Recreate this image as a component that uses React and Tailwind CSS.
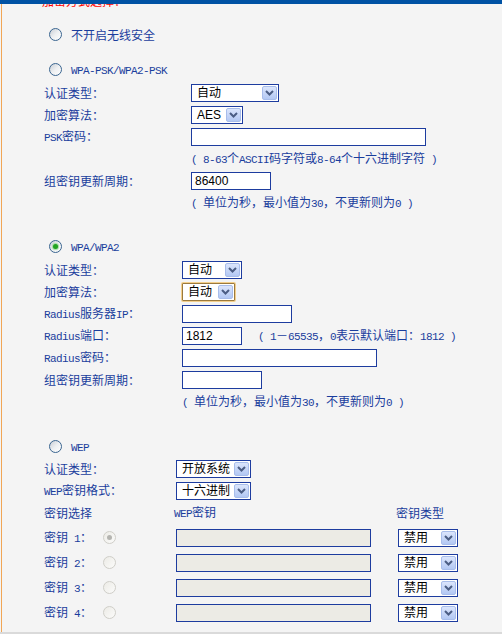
import React from "react";

// ASCII runs are set in a narrow mono face, CJK stays in Noto
function Txt({ s }) {
  return s.split(/([\x20-\x7e]+)/).map((p, i) =>
    /^[\x20-\x7e]+$/.test(p) ? (
      <span key={i} className="font-['Liberation_Mono'] text-[11px] tracking-[-0.6px]">
        {p}
      </span>
    ) : (
      <React.Fragment key={i}>{p}</React.Fragment>
    )
  );
}

function Chevron() {
  return (
    <svg width="9" height="6" viewBox="0 0 9 6">
      <polyline points="1,1 4.5,4.5 8,1" fill="none" stroke="#4b5d84" strokeWidth="2" />
    </svg>
  );
}

function Select({ value, width, focus }) {
  return (
    <div
      className={
        "h-[18px] bg-white flex items-center justify-between text-black text-[12px] font-['Liberation_Sans','Noto_Sans_CJK_SC',sans-serif] " +
        (focus
          ? "border border-[#9b7a3e] ring-1 ring-[#f3cf8c] rounded-[1px]"
          : "border border-[#1d3c9f]")
      }
      style={{ width }}
    >
      <span className="pl-[5px] leading-none">{value}</span>
      <span className="w-[15px] h-[14px] mr-[1px] rounded-[2px] border border-[#a8bdeb] bg-gradient-to-b from-[#dbe5fc] to-[#b3c8f3] flex items-center justify-center">
        <Chevron />
      </span>
    </div>
  );
}

function Input({ value = "", width, disabled }) {
  return (
    <div
      className={
        "h-[18px] border border-[#1d3c9f] flex items-center pl-[3px] text-black text-[12px] font-['Liberation_Sans',sans-serif] " +
        (disabled ? "bg-[#ecebe5]" : "bg-white")
      }
      style={{ width }}
    >
      {value}
    </div>
  );
}

function Radio({ checked, disabled }) {
  if (disabled) {
    return (
      <span className="w-[13px] h-[13px] rounded-full border border-[#cfcec8] bg-gradient-to-br from-[#ecebe6] to-[#fbfbfa] flex items-center justify-center">
        {checked && <span className="w-[5px] h-[5px] rounded-full bg-[#b4b4b0]" />}
      </span>
    );
  }
  return (
    <span className="w-[13px] h-[13px] rounded-full border border-[#3a6590] bg-gradient-to-br from-[#c9ced5] via-[#eef0f2] to-white flex items-center justify-center">
      {checked && (
        <span className="w-[5px] h-[5px] rounded-full bg-[#22a322] shadow-[0_0_1px_1px_#9fdc9f]" />
      )}
    </span>
  );
}

function RadioRow({ label, checked, className = "" }) {
  return (
    <div className={"h-[22px] flex items-center pl-[47px] gap-[9px] " + className}>
      <Radio checked={checked} />
      <span className="pt-[2px]">
        <Txt s={label} />
      </span>
    </div>
  );
}

function Row({ label, labelW, children, className = "" }) {
  return (
    <div className={"h-[22px] flex items-center pl-[42px] " + className}>
      <div className="shrink-0" style={{ width: labelW }}>
        <Txt s={label} />
      </div>
      {children}
    </div>
  );
}

function Hint({ s }) {
  return (
    <span className="whitespace-nowrap">
      <Txt s={s} />
    </span>
  );
}

export default function App() {
  const keys = [1, 2, 3, 4];
  return (
    <div className="w-[502px] h-[634px] bg-[#f4f4f4] flex flex-col overflow-hidden">
      <div className="h-[4px] shrink-0 bg-[#0052a4]" />
      <div className="flex-1 ml-[1px] border-l border-[#f1a656] overflow-hidden text-[12px] leading-[16px] text-[#1a3d9d] font-['Noto_Sans_CJK_SC',sans-serif]">
        <div className="-mt-[11px] h-[16px] pl-[40px] text-[#ff0000]">加密方式选择：</div>

        <RadioRow label="不开启无线安全" className="mt-[14px]" />

        <RadioRow label="WPA-PSK/WPA2-PSK" className="mt-[13px]" />
        <Row label="认证类型：" labelW={147} className="mt-[2px]">
          <Select value="自动" width={88} />
        </Row>
        <Row label="加密算法：" labelW={147}>
          <Select value="AES" width={52} />
        </Row>
        <Row label="PSK密码：" labelW={147}>
          <Input width={235} />
        </Row>
        <Row label="" labelW={147}>
          <Hint s="( 8-63个ASCII码字符或8-64个十六进制字符 )" />
        </Row>
        <Row label="组密钥更新周期：" labelW={147}>
          <Input value="86400" width={80} />
        </Row>
        <Row label="" labelW={147}>
          <Hint s="( 单位为秒，最小值为30，不更新则为0 )" />
        </Row>

        <RadioRow label="WPA/WPA2" checked className="mt-[21px]" />
        <Row label="认证类型：" labelW={138} className="mt-[2px]">
          <Select value="自动" width={60} />
        </Row>
        <Row label="加密算法：" labelW={138}>
          <Select value="自动" width={53} focus />
        </Row>
        <Row label="Radius服务器IP：" labelW={138}>
          <Input width={110} />
        </Row>
        <Row label="Radius端口：" labelW={138}>
          <Input value="1812" width={60} />
          <span className="ml-[16px]">
            <Hint s="( 1－65535，0表示默认端口：1812 )" />
          </span>
        </Row>
        <Row label="Radius密码：" labelW={138}>
          <Input width={195} />
        </Row>
        <Row label="组密钥更新周期：" labelW={138}>
          <Input width={80} />
        </Row>
        <Row label="" labelW={138}>
          <Hint s="( 单位为秒，最小值为30，不更新则为0 )" />
        </Row>

        <RadioRow label="WEP" className="mt-[22px]" />
        <Row label="认证类型：" labelW={132} className="mt-[1px]">
          <Select value="开放系统" width={75} />
        </Row>
        <Row label="WEP密钥格式：" labelW={132}>
          <Select value="十六进制" width={75} />
        </Row>
        <div className="h-[22px] flex items-center pl-[42px]">
          <div className="w-[130px]">密钥选择</div>
          <div className="w-[222px]">
            <Txt s="WEP密钥" />
          </div>
          <div>密钥类型</div>
        </div>
        <div className="mt-[1px] flex flex-col">
          {keys.map((k) => (
            <div key={k} className="h-[25px] flex items-center pl-[42px]">
              <div className="w-[59px] shrink-0">
                <Txt s={`密钥 ${k}：`} />
              </div>
              <div className="w-[73px] shrink-0 flex">
                <Radio disabled checked={k === 1} />
              </div>
              <Input width={195} disabled />
              <div className="ml-[27px]">
                <Select value="禁用" width={60} />
              </div>
            </div>
          ))}
        </div>
      </div>
      <div className="h-[2px] shrink-0 bg-[#dadada]" />
    </div>
  );
}
